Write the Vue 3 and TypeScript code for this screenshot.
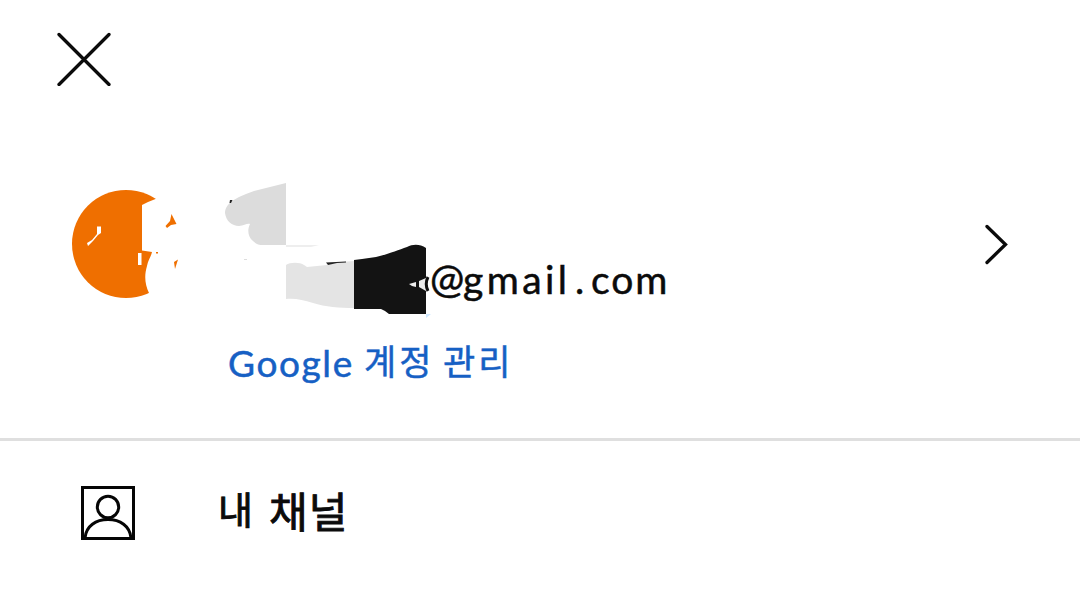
<script setup lang="ts">
const domain = ['@', 'gmail', '.', 'com']
const domainClasses = ['at', 'host', 'dot', 'tld']
const manageWords = [
  { text: 'Google', cls: 'brand' },
  { text: '계정', cls: 'word-account' },
  { text: '관리', cls: 'word-manage' },
]
const channelWords = [
  { text: '내', cls: 'word-my' },
  { text: '채널', cls: 'word-channel' },
]
</script>

<template>
  <main class="sheet">
    <header class="top">
      <button class="close" aria-label="닫기">
        <svg width="54" height="54" viewBox="57 32 54 54">
          <path d="M59 34.500L109 84.500M109 34.500L59 84.500" />
        </svg>
      </button>
    </header>

    <section class="account">
      <svg class="avatar" width="110" height="110" viewBox="71 189 110 110">
        <circle cx="126" cy="244" r="54" fill="#ef6f00" />
        <path
          fill="#fff"
          d="M142 205L146 203L148 202L153 200L158 198L162 188H182V299H150L149 293C145 285 144 276 147 266C148 260 151 257 152 252L142 250.500Z"
        />
        <path fill="#fff" d="M138 253H141.500V265H138ZM97 226.500H101V233L98 235L93 241L88 246L87 243L92 240L97 234Z" />
        <path fill="#ef6f00" d="M171.500 214L176.500 224L171 225L167 228L165.500 226L170 221ZM174 262L178 259.500L175 269ZM156 252H158V253.500H156Z" />
      </svg>

      <div class="details">
        <svg class="mask" width="210" height="144" viewBox="222 178 210 144">
          <path
            fill="#dcdcdc"
            d="M286 183L278 185L270 187L262 189L254 191L246 194L239 197L232 201C227 205 225 209 225 213C226 221 232 226 239 226C244 226 247 223 250 224C247 230 248 237 253 241C256 244 259 245 263 245H286Z"
          />
          <path fill="#222" d="M230 200L232.500 200L231 203H229.500Z" />
          <path fill="#eee" d="M286 245H319L311 247H286Z" />
          <path fill="#ddd" d="M244 259H247V260H244Z" />
          <path
            fill="#e4e4e4"
            d="M286 265C290 262 300 262 304 265L307 267L327 265L341 262L354 261V308C340 308 325 307 313 303C303 300 295 298 286 299Z"
          />
          <path fill="#222" d="M326 262.500L346 261.500V262.500L337 263L328 265Z" />
          <path
            fill="#131313"
            d="M354 260L362 259L376 257C389 254 398 250 407 247C413 244 420 244 426 248V314H389L385 311L381 309H354Z"
          />
          <path fill="#eee" d="M409 284L416 282V287L412 286ZM419 281L426 278V291L419 287Z" />
          <path fill="#cfe8ff" d="M426 314H431L426 318Z" />
        </svg>
        <p class="email"><span v-for="(part, i) in domain" :key="part" :class="domainClasses[i]">{{ part }}</span></p>
        <svg class="at-edge" width="12" height="44" viewBox="424 260 12 44">
          <path d="M428 277Q424.500 284 428 291" fill="none" stroke="#111" stroke-width="3" />
        </svg>
        <a class="manage"><template v-for="word in manageWords" :key="word.text"><span :class="word.cls">{{ word.text }}</span>{{ ' ' }}</template></a>
      </div>

      <svg class="chevron" width="24" height="42" viewBox="985 223 24 42">
        <path d="M987 226.500L1005.500 244.500L987 262.500" />
      </svg>
    </section>

    <nav class="menu">
      <a class="item">
        <svg class="person" width="54" height="54" viewBox="81 486 54 54">
          <rect x="82.500" y="487.500" width="51" height="51" />
          <circle cx="108" cy="507" r="10.700" />
          <path d="M85 538C86 526 96 519.500 108 519.500S130 526 131 538" />
        </svg>
        <span class="label"><template v-for="word in channelWords" :key="word.text"><span :class="word.cls">{{ word.text }}</span>{{ ' ' }}</template></span>
      </a>
    </nav>
  </main>
</template>

<style>
body {
  background: #fff;
}
</style>

<style scoped>
.sheet {
  width: 1080px;
  height: 598px;
  overflow: hidden;
  background: #fff;
  color: #0b0b0b;
  font-family: Lato, 'Noto Sans CJK KR', sans-serif;
}
.top {
  height: 120px;
  box-sizing: border-box;
  padding: 32px 0 0 57px;
}
.close {
  display: block;
  padding: 0;
  border: 0;
  background: none;
}
.close svg,
.avatar,
.chevron,
.person {
  display: block;
}
.close path,
.chevron path {
  fill: none;
  stroke: #0b0b0b;
  stroke-width: 3.3;
  stroke-linecap: round;
}
.account {
  display: flex;
  align-items: flex-start;
  height: 318px;
  border-bottom: 3px solid #dfdfdf;
}
.avatar {
  flex: none;
  margin: 69px 0 0 71px;
}
.details {
  position: relative;
  flex: 1;
  margin-left: 41px;
  padding-top: 134px;
}
.mask {
  position: absolute;
  left: 0;
  top: 58px;
}
.at-edge {
  position: absolute;
  left: 202px;
  top: 140px;
}
.email {
  display: flex;
  margin: 0 0 0 208px;
  height: 50px;
  font-size: 39px;
  line-height: 50px;
  white-space: nowrap;
  -webkit-text-stroke: 0.5px currentColor;
}
.at {
  width: 33px;
  font-size: 41px;
  line-height: 47px;
}
.host {
  width: 112px;
  letter-spacing: 3.4px;
}
.dot {
  width: 16px;
}
.tld {
  letter-spacing: 1.9px;
}
.manage {
  display: flex;
  margin: 34px 0 0 6px;
  height: 50px;
  color: #1660c4;
  font-size: 37px;
  line-height: 50px;
  white-space: nowrap;
  -webkit-text-stroke: 0.5px currentColor;
}
.brand {
  width: 136px;
  letter-spacing: 1.6px;
}
.word-account,
.word-manage {
  width: 79px;
  font-size: 35px;
  line-height: 46px;
  letter-spacing: 3px;
}
.chevron {
  flex: none;
  margin: 103px 71px 0 0;
}
.item {
  display: flex;
  align-items: flex-start;
  padding: 45px 0 0 81px;
}
.person {
  fill: none;
  stroke: #050505;
  stroke-width: 3;
}
.label {
  display: flex;
  margin: -1px 0 0 83px;
  font-size: 40px;
  line-height: 50px;
  white-space: nowrap;
  -webkit-text-stroke: 0.9px currentColor;
}
.word-my {
  width: 51px;
  font-size: 38px;
  line-height: 48px;
}
.word-channel {
  font-size: 42px;
  line-height: 55px;
  letter-spacing: 1px;
}
</style>
